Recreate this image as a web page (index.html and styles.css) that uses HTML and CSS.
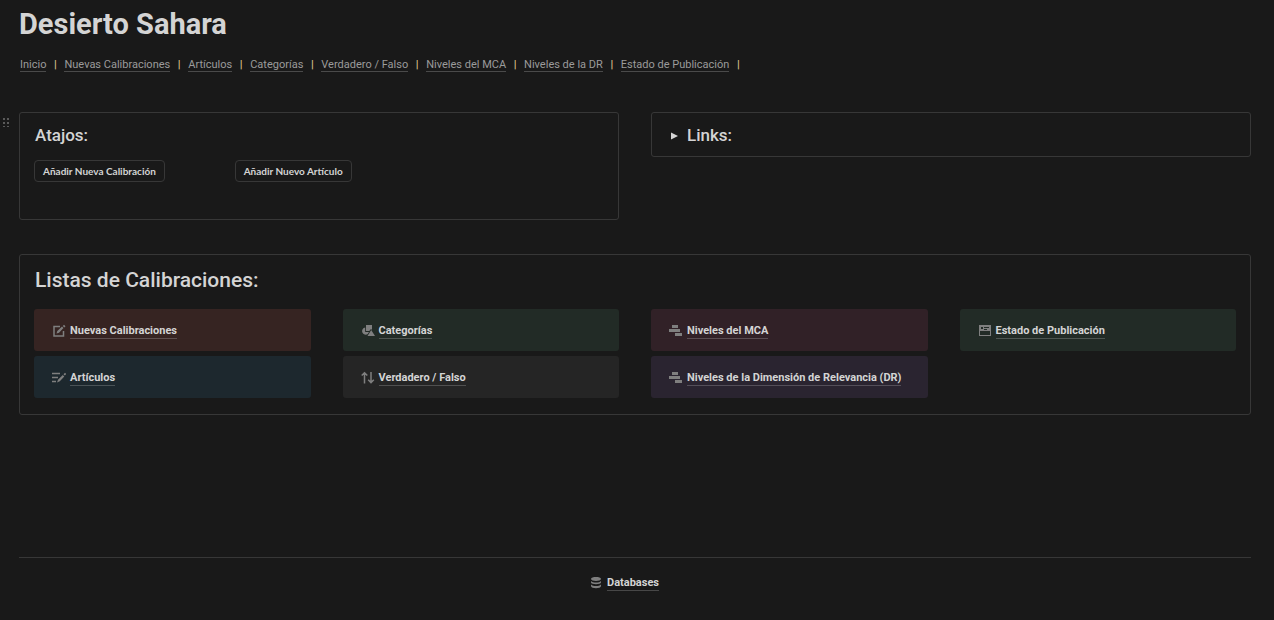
FILE: index.html
```html
<!DOCTYPE html>
<html lang="es">
<head>
<meta charset="utf-8">
<meta name="viewport" content="width=device-width, initial-scale=1">
<title>Desierto Sahara</title>
<link rel="stylesheet" href="styles.css">
</head>
<body>
<main class="page">
  <h1 class="title">Desierto Sahara</h1>
  <nav class="nav">
    <a href="#inicio">Inicio</a><span class="sep">|</span>
    <a href="#nuevas">Nuevas Calibraciones</a><span class="sep">|</span>
    <a href="#articulos">Artículos</a><span class="sep">|</span>
    <a href="#categorias">Categorías</a><span class="sep">|</span>
    <a href="#vf">Verdadero / Falso</a><span class="sep">|</span>
    <a href="#mca">Niveles del MCA</a><span class="sep">|</span>
    <a href="#dr">Niveles de la DR</a><span class="sep">|</span>
    <a href="#estado">Estado de Publicación</a><span class="sep">|</span>
  </nav>

  <div class="columns">
    <section class="box shortcuts">
      <svg class="handle" viewBox="0 0 7 10" aria-hidden="true"><path d="M0 0h2v2H0zM4 0h2v2H4zM0 4h2v2H0zM4 4h2v2H4zM0 8h2v1H0zM4 8h2v1H4z"/></svg>
      <h3 class="heading">Atajos:</h3>
      <div class="actions">
        <div><button type="button" class="action">Añadir Nueva Calibración</button></div>
        <div><button type="button" class="action">Añadir Nuevo Artículo</button></div>
      </div>
    </section>
    <details class="box links">
      <summary class="heading"><svg class="arrow" viewBox="0 0 7 8" aria-hidden="true"><path d="M0 .5l7 3.500-7 3.500z"/></svg>Links:</summary>
    </details>
  </div>

  <section class="box lists">
    <h2 class="subtitle">Listas de Calibraciones:</h2>
    <div class="grid">
      <div class="card red">
        <svg class="icon" viewBox="0 0 14 14" aria-hidden="true"><path class="line" d="M8 2.500H2v9.500h9.500V7"/><path d="M4.500 9.500l.8-2.500L10 2.600l1.500 1.500L7 8.700zM10.800 1.900L12 .8l1.500 1.500-1.200 1.100z"/></svg>
        <a href="#nuevas">Nuevas Calibraciones</a>
      </div>
      <div class="card green">
        <svg class="icon" viewBox="0 0 14 14" aria-hidden="true"><path d="M5 1h6v5L10 5 8.300 7H5zM4.200 3.500A3.600 3.600 0 1 0 6.800 10L8 8H4.200zM10.200 6l3.800 6H6.500z"/></svg>
        <a href="#categorias">Categorías</a>
      </div>
      <div class="card pink">
        <svg class="icon" viewBox="0 0 14 14" aria-hidden="true"><path d="M3 1h6v3H3zM0 5h11v3H0zM6 9h7v3H6z"/></svg>
        <a href="#mca">Niveles del MCA</a>
      </div>
      <div class="card green">
        <svg class="icon" viewBox="0 0 14 14" aria-hidden="true"><path fill-rule="evenodd" d="M1 1h12v11H1zM2 7v4h10V7zM3 3v2h2V3zM6 3v1h5V3zM6 5v1h3V5z"/></svg>
        <a href="#estado">Estado de Publicación</a>
      </div>
      <div class="card blue">
        <svg class="icon" viewBox="0 0 14 14" aria-hidden="true"><path class="line" d="M0 2.500h8M0 6.500h6M0 10.500h4"/><path d="M5 11.500l1-2.800L10.800 4l1.500 1.500-4.500 4.800zM11.500 3.300L13 1.800l1.200 1.200-1.400 1.600z"/></svg>
        <a href="#articulos">Artículos</a>
      </div>
      <div class="card gray">
        <svg class="icon" viewBox="0 0 14 14" aria-hidden="true"><path class="line" d="M3.500 12.500V2M.7 4.500L3.500 1.700l2.800 2.800M10 1v10.500M7.200 8.800l2.800 2.800 2.800-2.800"/></svg>
        <a href="#vf">Verdadero / Falso</a>
      </div>
      <div class="card purple">
        <svg class="icon" viewBox="0 0 14 14" aria-hidden="true"><path d="M3 1h6v3H3zM0 5h11v3H0zM6 9h7v3H6z"/></svg>
        <a href="#dr">Niveles de la Dimensión de Relevancia (DR)</a>
      </div>
    </div>
  </section>

  <footer class="footer">
    <svg class="icon" viewBox="0 0 14 14" aria-hidden="true"><path d="M2 3c0-2.600 10-2.600 10 0s-10 2.600-10 0zM2 5c2 2 8 2 10 0v1.500c0 2.300-10 2.300-10 0zM2 8.500c2 2 8 2 10 0V10c0 3-10 3-10 0z"/></svg>
    <a href="#databases">Databases</a>
  </footer>
</main>
</body>
</html>
```
FILE: styles.css
```css
* { box-sizing: border-box; }
body {
  margin: 0;
  background: #191919;
  color: #d4d4d4;
  font-family: Roboto, "Liberation Sans", sans-serif;
  font-size: 11px;
  line-height: 15px;
}
.page { padding: 7px 23px 0 19px; }
.title { margin: 0; font-size: 29px; line-height: 34px; font-weight: 700; }
.nav {
  display: flex;
  flex-wrap: wrap;
  margin-top: 17px;
  padding-left: 1px;
  color: #9b9b9b;
  line-height: 13px;
}
.nav a, .card a, .footer a {
  color: inherit;
  text-decoration: none;
  border-bottom: 1px solid #4a4a4a;
}
.nav .sep { width: 18px; text-align: center; font-weight: 700; color: #d9c08c; }
.columns {
  display: grid;
  grid-template-columns: 1fr 1fr;
  align-items: start;
  gap: 32px;
  margin-top: 40px;
}
.box { border: 1px solid #373737; border-radius: 3px; }
.heading { margin: 0; font-size: 17px; line-height: 23px; font-weight: 500; }
.shortcuts { position: relative; padding: 11px 14px 37px; }
.handle {
  position: absolute;
  left: -17px;
  top: 5px;
  width: 7px;
  height: 10px;
  fill: #5a5a5a;
}
.shortcuts .heading { padding-left: 1px; }
.actions {
  display: grid;
  grid-template-columns: repeat(3, 1fr);
  gap: 32px;
  margin-top: 13px;
}
.actions div { display: flex; }
.action {
  height: 22px;
  padding: 0 8px;
  border: 1px solid #373737;
  border-radius: 4px;
  background: transparent;
  color: #d4d4d4;
  font: 700 10px/16px Lato, "Liberation Sans", sans-serif;
  white-space: nowrap;
}
.links { padding: 11px 19px 9px; }
.links summary { display: flex; align-items: center; gap: 9px; cursor: pointer; list-style: none; }
.arrow { width: 7px; height: 8px; fill: #d4d4d4; }
.lists { margin-top: 34px; padding: 10px 14px 16px; }
.subtitle { margin: 0; padding-left: 1px; font-size: 21px; line-height: 30px; font-weight: 500; }
.grid {
  display: grid;
  grid-template-columns: repeat(4, 1fr);
  gap: 5px 32px;
  margin-top: 14px;
}
.card {
  display: flex;
  align-items: center;
  gap: 4px;
  padding: 14px 18px 12px;
  border-radius: 3px;
  font-weight: 700;
}
.icon { flex: none; width: 14px; height: 14px; fill: #7f7f7f; }
.icon .line { fill: none; stroke: #7f7f7f; stroke-width: 1.5; }
.red { background: #362422; }
.green { background: #222b26; }
.pink { background: #312127; }
.blue { background: #1d282e; }
.gray { background: #252525; }
.purple { background: #2a2430; }
.card a, .footer a { border-bottom-color: rgba(255, 255, 255, 0.2); }
.footer {
  display: flex;
  justify-content: center;
  align-items: center;
  gap: 4px;
  margin-top: 142px;
  padding: 17px 22px 24px 0;
  border-top: 1px solid #373737;
  font-weight: 700;
}
```
